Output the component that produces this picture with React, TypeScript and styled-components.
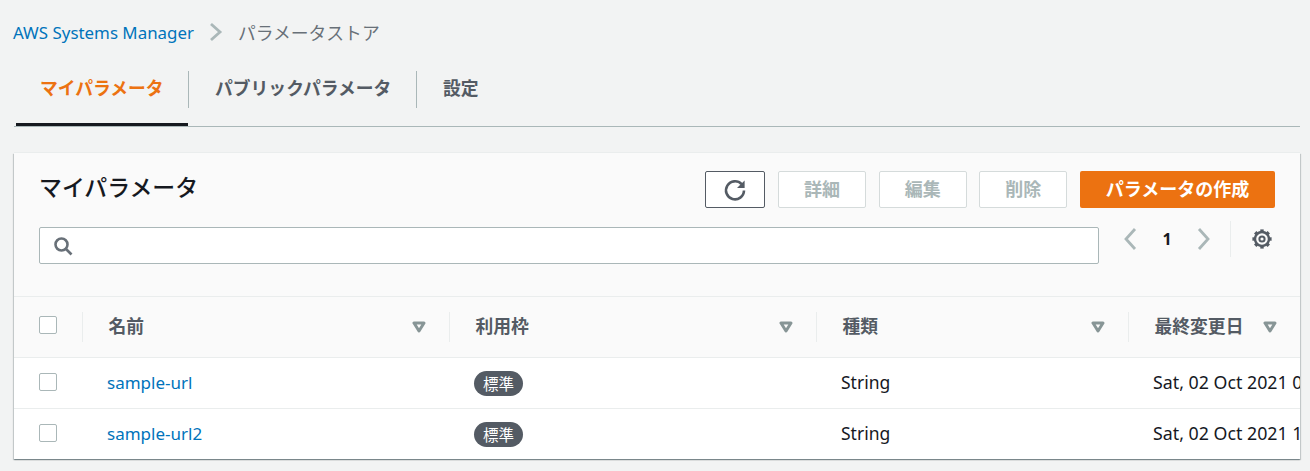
import React from "react";
import styled, { createGlobalStyle } from "styled-components";

const FONT = `"Noto Sans", "Noto Sans CJK JP", sans-serif`;

const GlobalStyle = createGlobalStyle`
  html, body {
    margin: 0;
    padding: 0;
    background: #f2f3f3;
    overflow: hidden;
  }
  body {
    font-family: ${FONT};
    font-size: 17.8px;
    color: #16191f;
  }
`;

function SortIcon() {
  return (
    <SortSvg viewBox="0 0 14 12">
      <path d="M2 2 H12 L7 10 Z" fill="none" stroke="#879596" strokeWidth="3" strokeLinejoin="round" />
    </SortSvg>
  );
}

function GearIcon() {
  return (
    <svg width="22" height="22" viewBox="0 0 22 22" fill="none" stroke="#545b64">
      <g strokeWidth="3.4">
        {[0, 45, 90, 135, 180, 225, 270, 315].map((a) => (
          <path key={a} d="M11 1.4 V4" transform={`rotate(${a} 11 11)`} />
        ))}
      </g>
      <circle cx="11" cy="11" r="7" strokeWidth="2.4" />
      <circle cx="11" cy="11" r="2.6" strokeWidth="2" />
    </svg>
  );
}

const columns = ["名前", "利用枠", "種類", "最終変更日"];

const rows = [
  { name: "sample-url", date: "Sat, 02 Oct 2021 0" },
  { name: "sample-url2", date: "Sat, 02 Oct 2021 1" },
];

export default function App() {
  return (
    <Page>
      <GlobalStyle />
      <Breadcrumb>
        <CrumbLink>AWS Systems Manager</CrumbLink>
        <CrumbChevron viewBox="0 0 14 20">
          <path d="M2 2 L11 10 L2 18" fill="none" stroke="#aab7b8" strokeWidth="2.8" />
        </CrumbChevron>
        <CrumbCurrent>パラメータストア</CrumbCurrent>
      </Breadcrumb>

      <Tabs>
        <Tab $active $width={172} $pad={24}>
          <TabLabel>マイパラメータ</TabLabel>
        </Tab>
        <Tab $divider $width={228} $pad={27}>
          <TabLabel>パブリックパラメータ</TabLabel>
        </Tab>
        <Tab $divider $width={100} $pad={27}>
          <TabLabel>設定</TabLabel>
        </Tab>
      </Tabs>

      <Card>
        <CardHeader>
          <HeaderTop>
            <Title>マイパラメータ</Title>
            <Actions>
              <RefreshButton>
                <svg width="24" height="24" viewBox="0 0 24 24" fill="none" stroke="#545b64" strokeWidth="2.6">
                  <path d="M18.6 6.2 A9 9 0 1 0 21 12.5" />
                  <path d="M21.6 2.4 V10 H14 Z" fill="#545b64" stroke="none" />
                </svg>
              </RefreshButton>
              <GhostButton>詳細</GhostButton>
              <GhostButton>編集</GhostButton>
              <GhostButton>削除</GhostButton>
              <PrimaryButton>パラメータの作成</PrimaryButton>
            </Actions>
          </HeaderTop>
          <HeaderBottom>
            <SearchBox>
              <svg width="20" height="20" viewBox="0 0 20 20" fill="none" stroke="#687078" strokeWidth="2.6">
                <circle cx="8.5" cy="8.5" r="6" />
                <path d="M13 13 L18.5 18.5" />
              </svg>
            </SearchBox>
            <Pager>
              <PagerArrow viewBox="0 0 14 24">
                <path d="M12 2 L3 12 L12 22" fill="none" stroke="#aab7b8" strokeWidth="2.8" />
              </PagerArrow>
              <PageNumber>1</PageNumber>
              <PagerArrow viewBox="0 0 14 24">
                <path d="M2 2 L11 12 L2 22" fill="none" stroke="#aab7b8" strokeWidth="2.8" />
              </PagerArrow>
              <PagerDivider />
              <GearIcon />
            </Pager>
          </HeaderBottom>
        </CardHeader>

        <TableHead>
          <HeadCheckCell>
            <Checkbox />
          </HeadCheckCell>
          {columns.map((title, i) => (
            <HeadCell key={title} $last={i === columns.length - 1}>
              <HeadLabel>{title}</HeadLabel>
              <SortIcon />
            </HeadCell>
          ))}
        </TableHead>

        {rows.map((r) => (
          <Row key={r.name}>
            <CheckCell>
              <Checkbox />
            </CheckCell>
            <Cell>
              <RowLink>{r.name}</RowLink>
            </Cell>
            <BadgeCell>
              <Badge>標準</Badge>
            </BadgeCell>
            <LatinCell>String</LatinCell>
            <Cell>{r.date}</Cell>
          </Row>
        ))}
      </Card>
    </Page>
  );
}

const Page = styled.div`
  width: 1310px;
  height: 471px;
  box-sizing: border-box;
  padding: 0 10px 0 14px;
  overflow: hidden;
`;

const Breadcrumb = styled.nav`
  height: 64px;
  display: flex;
  align-items: center;
  white-space: nowrap;
`;

const CrumbLink = styled.span`
  color: #0073bb;
  font-size: 16.9px;
  margin-left: -1px;
`;

const CrumbChevron = styled.svg`
  width: 14px;
  height: 20px;
  margin: 0 15px 0 15px;
`;

const CrumbCurrent = styled.span`
  color: #687078;
`;

const Tabs = styled.div`
  display: flex;
  height: 62px;
  padding-left: 2px;
  border-bottom: 1px solid #aab7b8;
`;

const Tab = styled.div<{ $active?: boolean; $divider?: boolean; $width: number; $pad: number }>`
  position: relative;
  box-sizing: border-box;
  width: ${(p) => p.$width}px;
  padding-left: ${(p) => p.$pad}px;
  height: 62px;
  display: flex;
  align-items: flex-start;
  font-weight: 700;
  white-space: nowrap;
  color: ${(p) => (p.$active ? "#ec7211" : "#545b64")};
  border-bottom: 3px solid ${(p) => (p.$active ? "#16191f" : "transparent")};
  &::before {
    content: "";
    display: ${(p) => (p.$divider ? "block" : "none")};
    position: absolute;
    left: 0;
    top: 7px;
    height: 37px;
    width: 1px;
    background: #aab7b8;
  }
`;

const TabLabel = styled.span`
  line-height: 26px;
  margin-top: 11px;
`;

const Card = styled.section`
  margin-top: 26px;
  background: #fff;
  box-shadow: 0 1px 1px 0 rgba(0, 28, 36, 0.3), 1px 1px 1px 0 rgba(0, 28, 36, 0.15),
    -1px 1px 1px 0 rgba(0, 28, 36, 0.15), 0 -1px 0 0 #eaeded;
  overflow: hidden;
`;

const CardHeader = styled.div`
  background: #fafafa;
  height: 144px;
  box-sizing: border-box;
  padding: 18px 25px 0;
  border-bottom: 1px solid #eaeded;
`;

const HeaderTop = styled.div`
  display: flex;
  justify-content: space-between;
  align-items: flex-start;
  height: 56px;
`;

const Title = styled.h2`
  margin: 0;
  font-size: 22.9px;
  font-weight: 500;
  line-height: 34px;
`;

const Actions = styled.div`
  display: flex;
  gap: 12.67px;
`;

const ButtonBase = styled.div`
  box-sizing: border-box;
  height: 37px;
  display: flex;
  align-items: center;
  justify-content: center;
  border-radius: 2px;
  font-size: 18px;
  font-weight: 700;
`;

const RefreshButton = styled(ButtonBase)`
  width: 60px;
  background: #fff;
  border: 1px solid #545b64;
`;

const GhostButton = styled(ButtonBase)`
  width: 88px;
  padding-bottom: 4px;
  background: #fff;
  border: 1px solid #d5dbdb;
  color: #aab7b8;
`;

const PrimaryButton = styled(ButtonBase)`
  width: 195px;
  padding-bottom: 4px;
  background: #ec7211;
  color: #fff;
`;

const HeaderBottom = styled.div`
  display: flex;
  align-items: flex-start;
`;

const SearchBox = styled.div`
  box-sizing: border-box;
  width: 1060px;
  height: 37px;
  display: flex;
  align-items: center;
  padding-left: 13px;
  background: #fff;
  border: 1px solid #aab7b8;
  border-radius: 2px;
`;

const Pager = styled.div`
  display: flex;
  align-items: center;
  height: 36px;
  margin-left: 24px;
  margin-top: -6px;
`;

const PagerArrow = styled.svg`
  width: 14px;
  height: 24px;
`;

const PageNumber = styled.span`
  width: 60px;
  text-align: center;
  font-weight: 700;
  font-size: 16px;
`;

const PagerDivider = styled.div`
  width: 1px;
  height: 36px;
  background: #eaeded;
  margin: 0 20px 0 19px;
`;

const GRID = "68px 367px 367px 312px 172px";

const TableHead = styled.div`
  display: grid;
  grid-template-columns: ${GRID};
  height: 61px;
  background: #fafafa;
  border-bottom: 1px solid #eaeded;
  box-sizing: border-box;
  align-items: center;
`;

const Row = styled.div`
  display: grid;
  grid-template-columns: ${GRID};
  height: 51px;
  box-sizing: border-box;
  padding-bottom: 2px;
  border-bottom: 1px solid #eaeded;
  align-items: center;
  white-space: nowrap;
  overflow: hidden;
  &:last-child {
    border-bottom: none;
    height: 50px;
  }
`;

const CheckCell = styled.div`
  padding-left: 25px;
  display: flex;
  align-items: center;
`;

const HeadCheckCell = styled(CheckCell)`
  padding-bottom: 4px;
`;

const Checkbox = styled.div`
  box-sizing: border-box;
  width: 18px;
  height: 18px;
  background: #fff;
  border: 1px solid #aab7b8;
  border-radius: 2px;
`;

const HeadCell = styled.div<{ $last?: boolean }>`
  box-sizing: border-box;
  height: 30px;
  display: flex;
  align-items: center;
  justify-content: ${(p) => (p.$last ? "flex-start" : "space-between")};
  gap: ${(p) => (p.$last ? "20px" : "0")};
  padding: 0 23px 0 25.5px;
  border-left: 1px solid #eaeded;
  font-weight: 700;
  color: #545b64;
`;

const HeadLabel = styled.span`
  white-space: nowrap;
  padding-bottom: 5px;
`;

const SortSvg = styled.svg`
  width: 14px;
  height: 12px;
  flex: none;
`;

const Cell = styled.div`
  padding-left: 25px;
  overflow: hidden;
`;

const LatinCell = styled(Cell)`
  font-size: 17.5px;
`;

const BadgeCell = styled(Cell)`
  padding-top: 2px;
`;

const RowLink = styled.span`
  color: #0073bb;
  font-size: 17px;
`;

const Badge = styled.span`
  display: inline-flex;
  align-items: center;
  justify-content: center;
  width: 49px;
  height: 25px;
  border-radius: 13px;
  background: #545b64;
  color: #fff;
  font-size: 15.5px;
`;
